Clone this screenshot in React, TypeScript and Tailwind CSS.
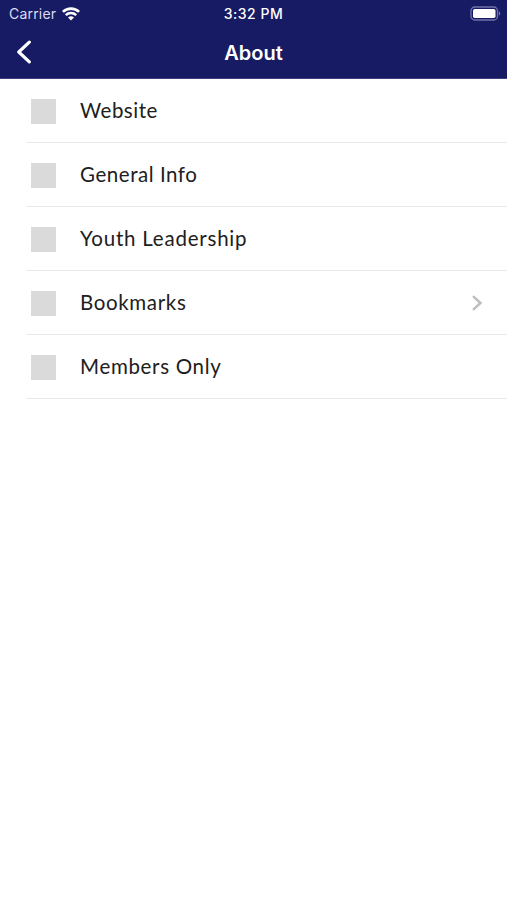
type MenuItem = {
  label: string;
  tracking: string;
  hasChildren?: boolean;
};

const menuItems: MenuItem[] = [
  { label: "Website", tracking: "tracking-[0.5px]" },
  { label: "General Info", tracking: "tracking-[0.55px]" },
  { label: "Youth Leadership", tracking: "tracking-[0.78px]" },
  { label: "Bookmarks", tracking: "tracking-[0.65px]", hasChildren: true },
  { label: "Members Only", tracking: "tracking-[0.68px]" },
];

function WifiIcon() {
  return (
    <svg aria-hidden="true" viewBox="0 0 18 14" className="h-3.5 w-[18px]" fill="none">
      <path d="M.9 4.9a11.7 11.7 0 0 1 16.2 0" stroke="white" strokeWidth="2.7" />
      <path d="M3.8 8.1a7.5 7.5 0 0 1 10.4 0" stroke="white" strokeWidth="2.5" />
      <path d="M9 13.6 6 10.6a4.3 4.3 0 0 1 6 0Z" fill="white" />
    </svg>
  );
}

function BatteryIcon() {
  return (
    <svg aria-hidden="true" viewBox="0 0 31 15" className="h-[15px] w-[31px]" fill="none">
      <rect x="1" y="1" width="26.5" height="13" rx="3.8" stroke="#7073a6" strokeWidth="1.3" />
      <rect x="3" y="3" width="22.5" height="9" rx="1.8" fill="white" />
      <path d="M28.9 5.4c1.8.7 1.8 3.5 0 4.2Z" fill="#7d80ae" />
    </svg>
  );
}

function StatusBar() {
  return (
    <div className="grid h-[27px] grid-cols-[1fr_auto_1fr] items-center pl-[9px] pr-1.5 text-white">
      <div className="flex items-center gap-1.5">
        <span className="text-[14px] leading-none tracking-[0.2px] text-[#dcdcf2]">Carrier</span>
        <WifiIcon />
      </div>
      <span className="-ml-[3px] text-center text-[14px] font-medium leading-none tracking-[0.5px]">
        3:32 PM
      </span>
      <div className="flex justify-end">
        <BatteryIcon />
      </div>
    </div>
  );
}

export default function App() {
  return (
    <div className="min-h-screen bg-white font-['Inter',sans-serif]">
      <header className="h-[79px] border-b border-[#3c4080] bg-[#171b64]">
        <StatusBar />
        <div className="grid h-[50px] grid-cols-[1fr_auto_1fr] items-center text-white">
          <button aria-label="Back" className="pl-4">
            <svg aria-hidden="true" viewBox="0 0 16 24" className="h-6 w-4" fill="none">
              <path
                d="M13.3 2.2 2.8 12l10.5 9.8"
                stroke="white"
                strokeWidth="3.2"
                strokeLinecap="round"
                strokeLinejoin="round"
              />
            </svg>
          </button>
          <h1 className="pt-px text-[20px] font-semibold leading-none">About</h1>
        </div>
      </header>

      <ul className="pl-[26px] font-['Lato',sans-serif]">
        {menuItems.map((item) => (
          <li
            key={item.label}
            className="flex h-16 items-center border-b border-[#eaeaea] pl-[5px] pr-6"
          >
            <span className="mt-px h-[25px] w-[25px] shrink-0 bg-[#dadada]" />
            <span
              className={`-mt-0.5 ml-6 flex-1 text-[20.5px] leading-6 text-[#202020] ${item.tracking}`}
            >
              {item.label}
            </span>
            {item.hasChildren && (
              <svg aria-hidden="true" viewBox="0 0 12 16" className="h-4 w-3" fill="none">
                <path d="m2 1.2 7.5 6.8L2 14.8" stroke="#bdbdbd" strokeWidth="2.4" />
              </svg>
            )}
          </li>
        ))}
      </ul>
    </div>
  );
}
